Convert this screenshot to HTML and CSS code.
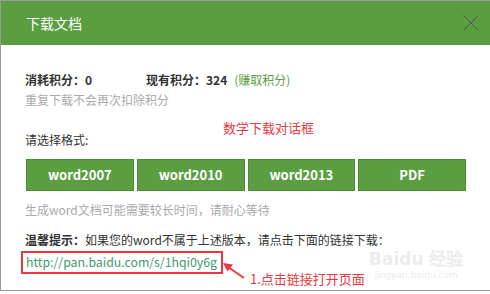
FILE: index.html
```html
<!DOCTYPE html>
<html lang="zh-CN">
<head>
<meta charset="utf-8">
<title>下载文档</title>
<link rel="stylesheet" href="styles.css">
</head>
<body>
<div class="dialog">
    <div class="dlg-head">
        <span class="dlg-title">下载文档</span>
        <a class="dlg-close" href="#">
            <svg width="16" height="16" viewBox="0 0 16 16"><path d="M0.5 0.5 L15.5 15.5 M15.5 0.5 L0.5 15.5" stroke="#555" stroke-width="1" fill="none"/></svg>
        </a>
    </div>
    <div class="dlg-body">
        <div class="points">
            <span class="cost">消耗积分：0</span>
            <span class="have">现有积分：324</span>
            <a class="earn" href="#">(赚取积分)</a>
        </div>
        <p class="tip">重复下载不会再次扣除积分</p>
        <p class="label">请选择格式:</p>
        <span class="note note-title">数学下载对话框</span>
        <div class="formats">
            <a class="fmt-btn" href="#">word2007</a>
            <a class="fmt-btn" href="#">word2010</a>
            <a class="fmt-btn" href="#">word2013</a>
            <a class="fmt-btn" href="#">PDF</a>
        </div>
        <p class="tip wait">生成word文档可能需要较长时间，请耐心等待</p>
        <p class="hint"><b>温馨提示：</b>如果您的word不属于上述版本，请点击下面的链接下载：</p>
        <div class="link-row">
            <a class="pan-link" href="#">http://pan.baidu.com/s/1hqi0y6g</a>
            <svg class="arrow" width="26" height="20" viewBox="0 0 26 20">
                <path d="M22 16 L6 5" stroke="#e8383d" stroke-width="2" fill="none"/>
                <path d="M1 1 L11 2.5 L5.5 9.5 Z" fill="#e8383d"/>
            </svg>
            <span class="note note-step">1.点击链接打开页面</span>
        </div>
        <div class="watermark"><span class="wm-logo">Bai<i>du</i> 经验</span><span class="wm-url">jingyan.baidu.com</span></div>
    </div>
</div>
</body>
</html>
```

FILE: styles.css
```css
* { margin: 0; padding: 0; }
body { font-family: "Noto Sans CJK SC", "Microsoft YaHei", sans-serif; font-size: 12px; color: #333; background: #fff; }
a { text-decoration: none; }
.dialog { border: 1px solid #9a9a9a; border-right: none; height: 289px; overflow: hidden; }
.dlg-head { height: 44px; background: #5a9e41; display: flex; align-items: center; justify-content: space-between; padding: 0 11px 0 25px; }
.dlg-title { color: #fff; font-size: 14px; }
.dlg-close { display: block; width: 16px; height: 16px; margin-top: -1px; }
.dlg-close svg { display: block; }
.dlg-body { position: relative; padding: 25px 24px 0; }
.points { height: 20px; line-height: 20px; font-weight: bold; display: flex; }
.cost { width: 121px; }
.have { margin-right: 7px; }
.earn { color: #5a9e41; font-weight: normal; }
.tip { height: 20px; line-height: 20px; color: #aaa; }
.label { margin-top: 20px; height: 20px; line-height: 20px; }
.note { position: absolute; color: #e8383d; font-size: 13px; }
.note-title { left: 222px; top: 73px; }
.formats { display: grid; grid-template-columns: repeat(4, 1fr); gap: 3px; width: 440px; margin: 9px 0 0 1px; }
.fmt-btn { display: block; height: 30px; line-height: 30px; text-align: center; background: #5a9e41; border: 1px solid #4b8c35; color: #fff; font-weight: bold; font-size: 13px; }
.wait { margin-top: 9px; }
.hint { margin-top: 10px; height: 20px; line-height: 20px; }
.link-row { position: relative; margin: 1px 0 0 -4px; height: 23px; }
.pan-link { display: inline-block; height: 19px; line-height: 19px; padding: 0 4px 0 3px; border: 2px solid #e8383d; color: #3f9b70; font-size: 12.3px; }
.arrow { position: absolute; left: 201px; top: 11px; }
.note-step { left: 229px; top: 18px; font-size: 13px; }
.watermark { position: absolute; left: 368px; top: 204px; display: flex; flex-direction: column; align-items: center; color: #ececec; font-family: "DejaVu Sans", sans-serif; }
.wm-logo { font-size: 17px; font-weight: bold; line-height: 20px; }
.wm-logo i { font-style: normal; }
.wm-url { font-size: 9px; line-height: 12px; }
```
